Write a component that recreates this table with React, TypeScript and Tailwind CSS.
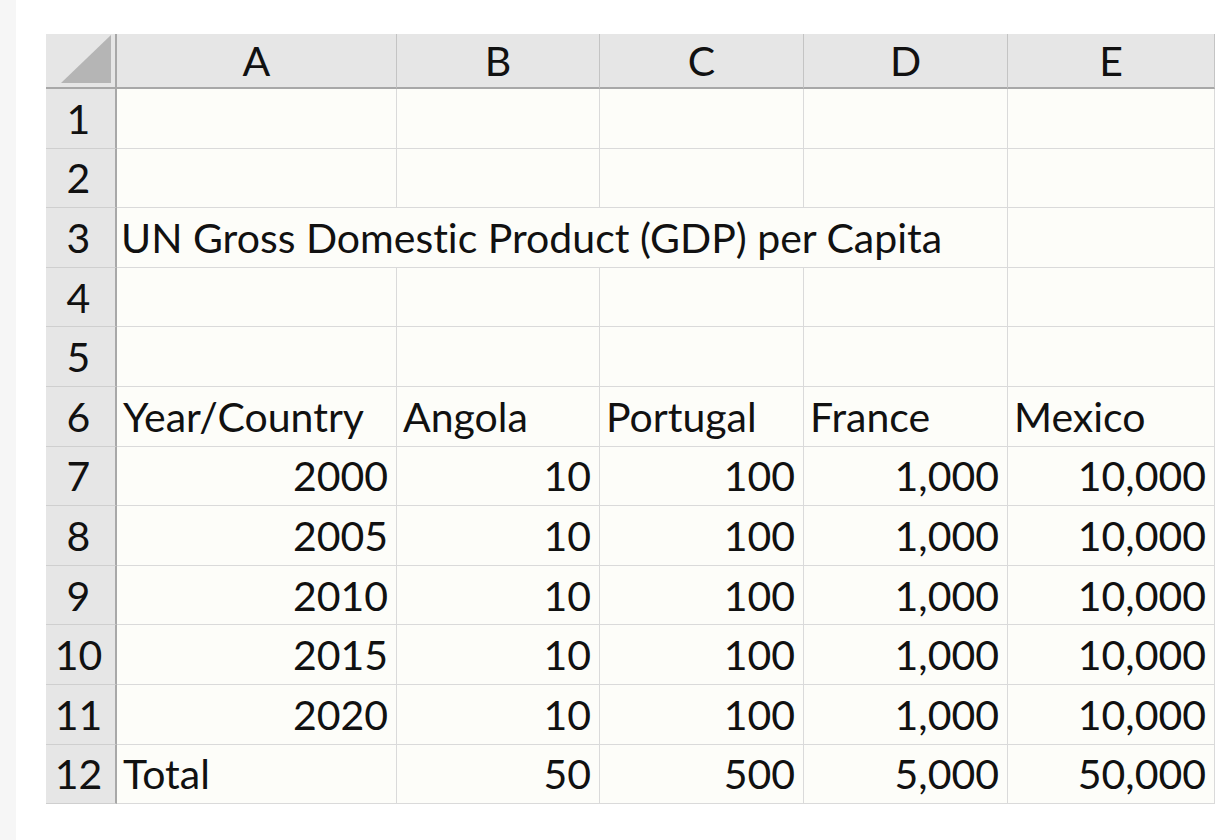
const columns = ["A", "B", "C", "D", "E"];

type Cell = { text: string; align?: "left" | "right" };

const years = ["2000", "2005", "2010", "2015", "2020"];

const blank: Cell[] = [{ text: "" }, { text: "" }, { text: "" }, { text: "" }, { text: "" }];

const rows: Cell[][] = [
  blank,
  blank,
  [], // title row, rendered separately
  blank,
  blank,
  [
    { text: "Year/Country" },
    { text: "Angola" },
    { text: "Portugal" },
    { text: "France" },
    { text: "Mexico" },
  ],
  ...years.map((y) => [
    { text: y, align: "right" as const },
    { text: "10", align: "right" as const },
    { text: "100", align: "right" as const },
    { text: "1,000", align: "right" as const },
    { text: "10,000", align: "right" as const },
  ]),
  [
    { text: "Total" },
    { text: "50", align: "right" },
    { text: "500", align: "right" },
    { text: "5,000", align: "right" },
    { text: "50,000", align: "right" },
  ],
];

function RowHeader({ n }: { n: number }) {
  return (
    <div className="flex items-center justify-center bg-[#e6e6e6] border-r-2 border-r-[#a8a8a8] border-b border-b-[#cfcfcf] pr-1">
      {n}
    </div>
  );
}

export default function App() {
  return (
    <div className="flex min-h-screen bg-white text-[#111] font-['Lato',sans-serif] text-[41px] leading-none [font-variant-ligatures:none]">
      <div className="w-4 shrink-0 bg-[#f6f6f6]" />
      <div className="pl-[30px] pt-[34px]">
        <div className="grid grid-cols-[71px_280px_203px_204px_204px_207px] grid-rows-[55px_repeat(12,59.6px)] bg-[#fdfdf9]">
          {/* select-all corner */}
          <div className="flex items-end justify-end bg-[#e6e6e6] border-r-2 border-r-[#a8a8a8] border-b-2 border-b-[#a8a8a8] pb-[4px] pr-[4px]">
            <svg width="50" height="48" viewBox="0 0 50 48">
              <polygon points="50,0 50,48 0,48" fill="#b5b5b5" />
            </svg>
          </div>
          {columns.map((c) => (
            <div
              key={c}
              className="flex items-center justify-center bg-[#e6e6e6] border-r border-r-[#c4c4c4] border-b-2 border-b-[#a8a8a8]"
            >
              {c}
            </div>
          ))}

          {rows.map((cells, i) => {
            const n = i + 1;
            if (n === 3) {
              return (
                <div key={n} className="contents">
                  <RowHeader n={n} />
                  <div className="col-span-4 flex items-center px-[4px] whitespace-nowrap border-r border-b border-[#dadada]">
                    UN Gross Domestic Product (GDP) per Capita
                  </div>
                  <div className="border-r border-b border-[#dadada]" />
                </div>
              );
            }
            return (
              <div key={n} className="contents">
                <RowHeader n={n} />
                {cells.map((cell, j) => (
                  <div
                    key={j}
                    className={`flex items-center whitespace-nowrap border-r border-b border-[#dadada] ${
                      cell.align === "right" ? "justify-end pr-[8px]" : "justify-start pl-[6px]"
                    }`}
                  >
                    {cell.text}
                  </div>
                ))}
              </div>
            );
          })}
        </div>
      </div>
    </div>
  );
}
